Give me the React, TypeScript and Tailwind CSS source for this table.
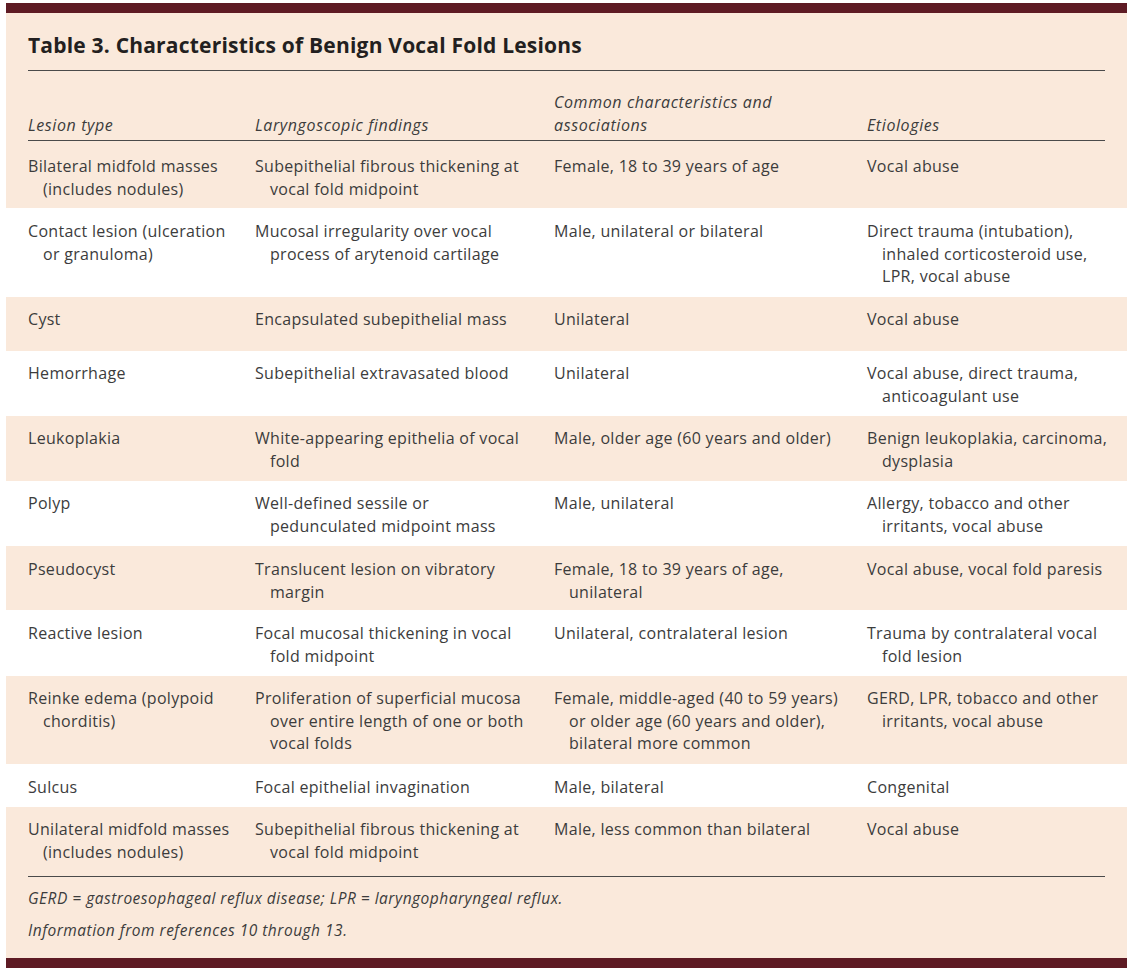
import React from "react";

type Row = {
  cells: string[][];
  pt?: string;
  pb?: string;
  white?: boolean;
};

const rows: Row[] = [
  {
    cells: [
      ["Bilateral midfold masses", "(includes nodules)"],
      ["Subepithelial fibrous thickening at", "vocal fold midpoint"],
      ["Female, 18 to 39 years of age"],
      ["Vocal abuse"],
    ],
    pt: "pt-[14px]",
    pb: "pb-[8px]",
  },
  {
    white: true,
    cells: [
      ["Contact lesion (ulceration", "or granuloma)"],
      ["Mucosal irregularity over vocal", "process of arytenoid cartilage"],
      ["Male, unilateral or bilateral"],
      ["Direct trauma (intubation),", "inhaled corticosteroid use,", "LPR, vocal abuse"],
    ],
    pt: "pt-[12px]",
    pb: "pb-[9px]",
  },
  {
    cells: [["Cyst"], ["Encapsulated subepithelial mass"], ["Unilateral"], ["Vocal abuse"]],
    pt: "pt-[11px]",
    pb: "pb-[21px]",
  },
  {
    white: true,
    cells: [
      ["Hemorrhage"],
      ["Subepithelial extravasated blood"],
      ["Unilateral"],
      ["Vocal abuse, direct trauma,", "anticoagulant use"],
    ],
  },
  {
    cells: [
      ["Leukoplakia"],
      ["White-appearing epithelia of vocal", "fold"],
      ["Male, older age (60 years and older)"],
      ["Benign leukoplakia, carcinoma,", "dysplasia"],
    ],
  },
  {
    white: true,
    cells: [
      ["Polyp"],
      ["Well-defined sessile or", "pedunculated midpoint mass"],
      ["Male, unilateral"],
      ["Allergy, tobacco and other", "irritants, vocal abuse"],
    ],
  },
  {
    cells: [
      ["Pseudocyst"],
      ["Translucent lesion on vibratory", "margin"],
      ["Female, 18 to 39 years of age,", "unilateral"],
      ["Vocal abuse, vocal fold paresis"],
    ],
    pt: "pt-[12px]",
    pb: "pb-[7px]",
  },
  {
    white: true,
    cells: [
      ["Reactive lesion"],
      ["Focal mucosal thickening in vocal", "fold midpoint"],
      ["Unilateral, contralateral lesion"],
      ["Trauma by contralateral vocal", "fold lesion"],
    ],
    pt: "pt-[12px]",
  },
  {
    cells: [
      ["Reinke edema (polypoid", "chorditis)"],
      ["Proliferation of superficial mucosa", "over entire length of one or both", "vocal folds"],
      ["Female, middle-aged (40 to 59 years)", "or older age (60 years and older),", "bilateral more common"],
      ["GERD, LPR, tobacco and other", "irritants, vocal abuse"],
    ],
  },
  {
    white: true,
    cells: [["Sulcus"], ["Focal epithelial invagination"], ["Male, bilateral"], ["Congenital"]],
    pt: "pt-[12px]",
  },
  {
    cells: [
      ["Unilateral midfold masses", "(includes nodules)"],
      ["Subepithelial fibrous thickening at", "vocal fold midpoint"],
      ["Male, less common than bilateral"],
      ["Vocal abuse"],
    ],
    pb: "pb-[13px]",
  },
];

function Cell({ lines }: { lines: string[] }) {
  return (
    <div className="flex flex-col">
      {lines.map((l, i) => (
        <div key={i} className={i === 0 ? "whitespace-nowrap" : "whitespace-nowrap pl-[15px]"}>
          {l}
        </div>
      ))}
    </div>
  );
}

const grid = "grid grid-cols-[227px_299px_313px_1fr]";

export default function App() {
  return (
    <div
      className="w-[1136px] h-[972px] bg-white pt-[3px] pl-[6px]"
      style={{ fontFamily: '"Open Sans", "Noto Sans", sans-serif' }}
    >
      <div className="w-[1121px] bg-[#fae9db] text-[#3c3c3c]">
        <div className="h-[10px] bg-[#5e1b24]" />
        <div className="px-[22px]">
          <h1 className="pt-[18px] pb-[11px] text-[21px] leading-[28px] font-bold text-[#231f20] tracking-[0.2px]">
            Table 3. Characteristics of Benign Vocal Fold Lesions
          </h1>
          <div className={`${grid} items-end border-t-[1.5px] border-b-[1.5px] border-[#4a4a4a] pt-[20px] pb-[4px] text-[16px] leading-[22.5px] italic tracking-[0.6px]`}>
            <div>Lesion type</div>
            <div>Laryngoscopic findings</div>
            <div>
              <div>Common characteristics and</div>
              <div>associations</div>
            </div>
            <div>Etiologies</div>
          </div>
        </div>
        {rows.map((r, i) => (
          <div key={i} className={r.white ? "bg-white" : ""}>
            <div
              className={`${grid} mx-[22px] ${r.pt ?? "pt-[11px]"} ${r.pb ?? "pb-[9px]"} text-[16px] leading-[22.5px] tracking-[0.3px]`}
            >
              {r.cells.map((c, j) => (
                <Cell key={j} lines={c} />
              ))}
            </div>
          </div>
        ))}
        <div className="mx-[22px] border-t-[1.5px] border-[#4a4a4a] pt-[10px] pb-[17px] text-[15.5px] leading-[22px] italic tracking-[0.5px]">
          <div>GERD = gastroesophageal reflux disease; LPR = laryngopharyngeal reflux.</div>
          <div className="mt-[10px]">Information from references 10 through 13.</div>
        </div>
        <div className="h-[10px] bg-[#5e1b24]" />
      </div>
    </div>
  );
}
